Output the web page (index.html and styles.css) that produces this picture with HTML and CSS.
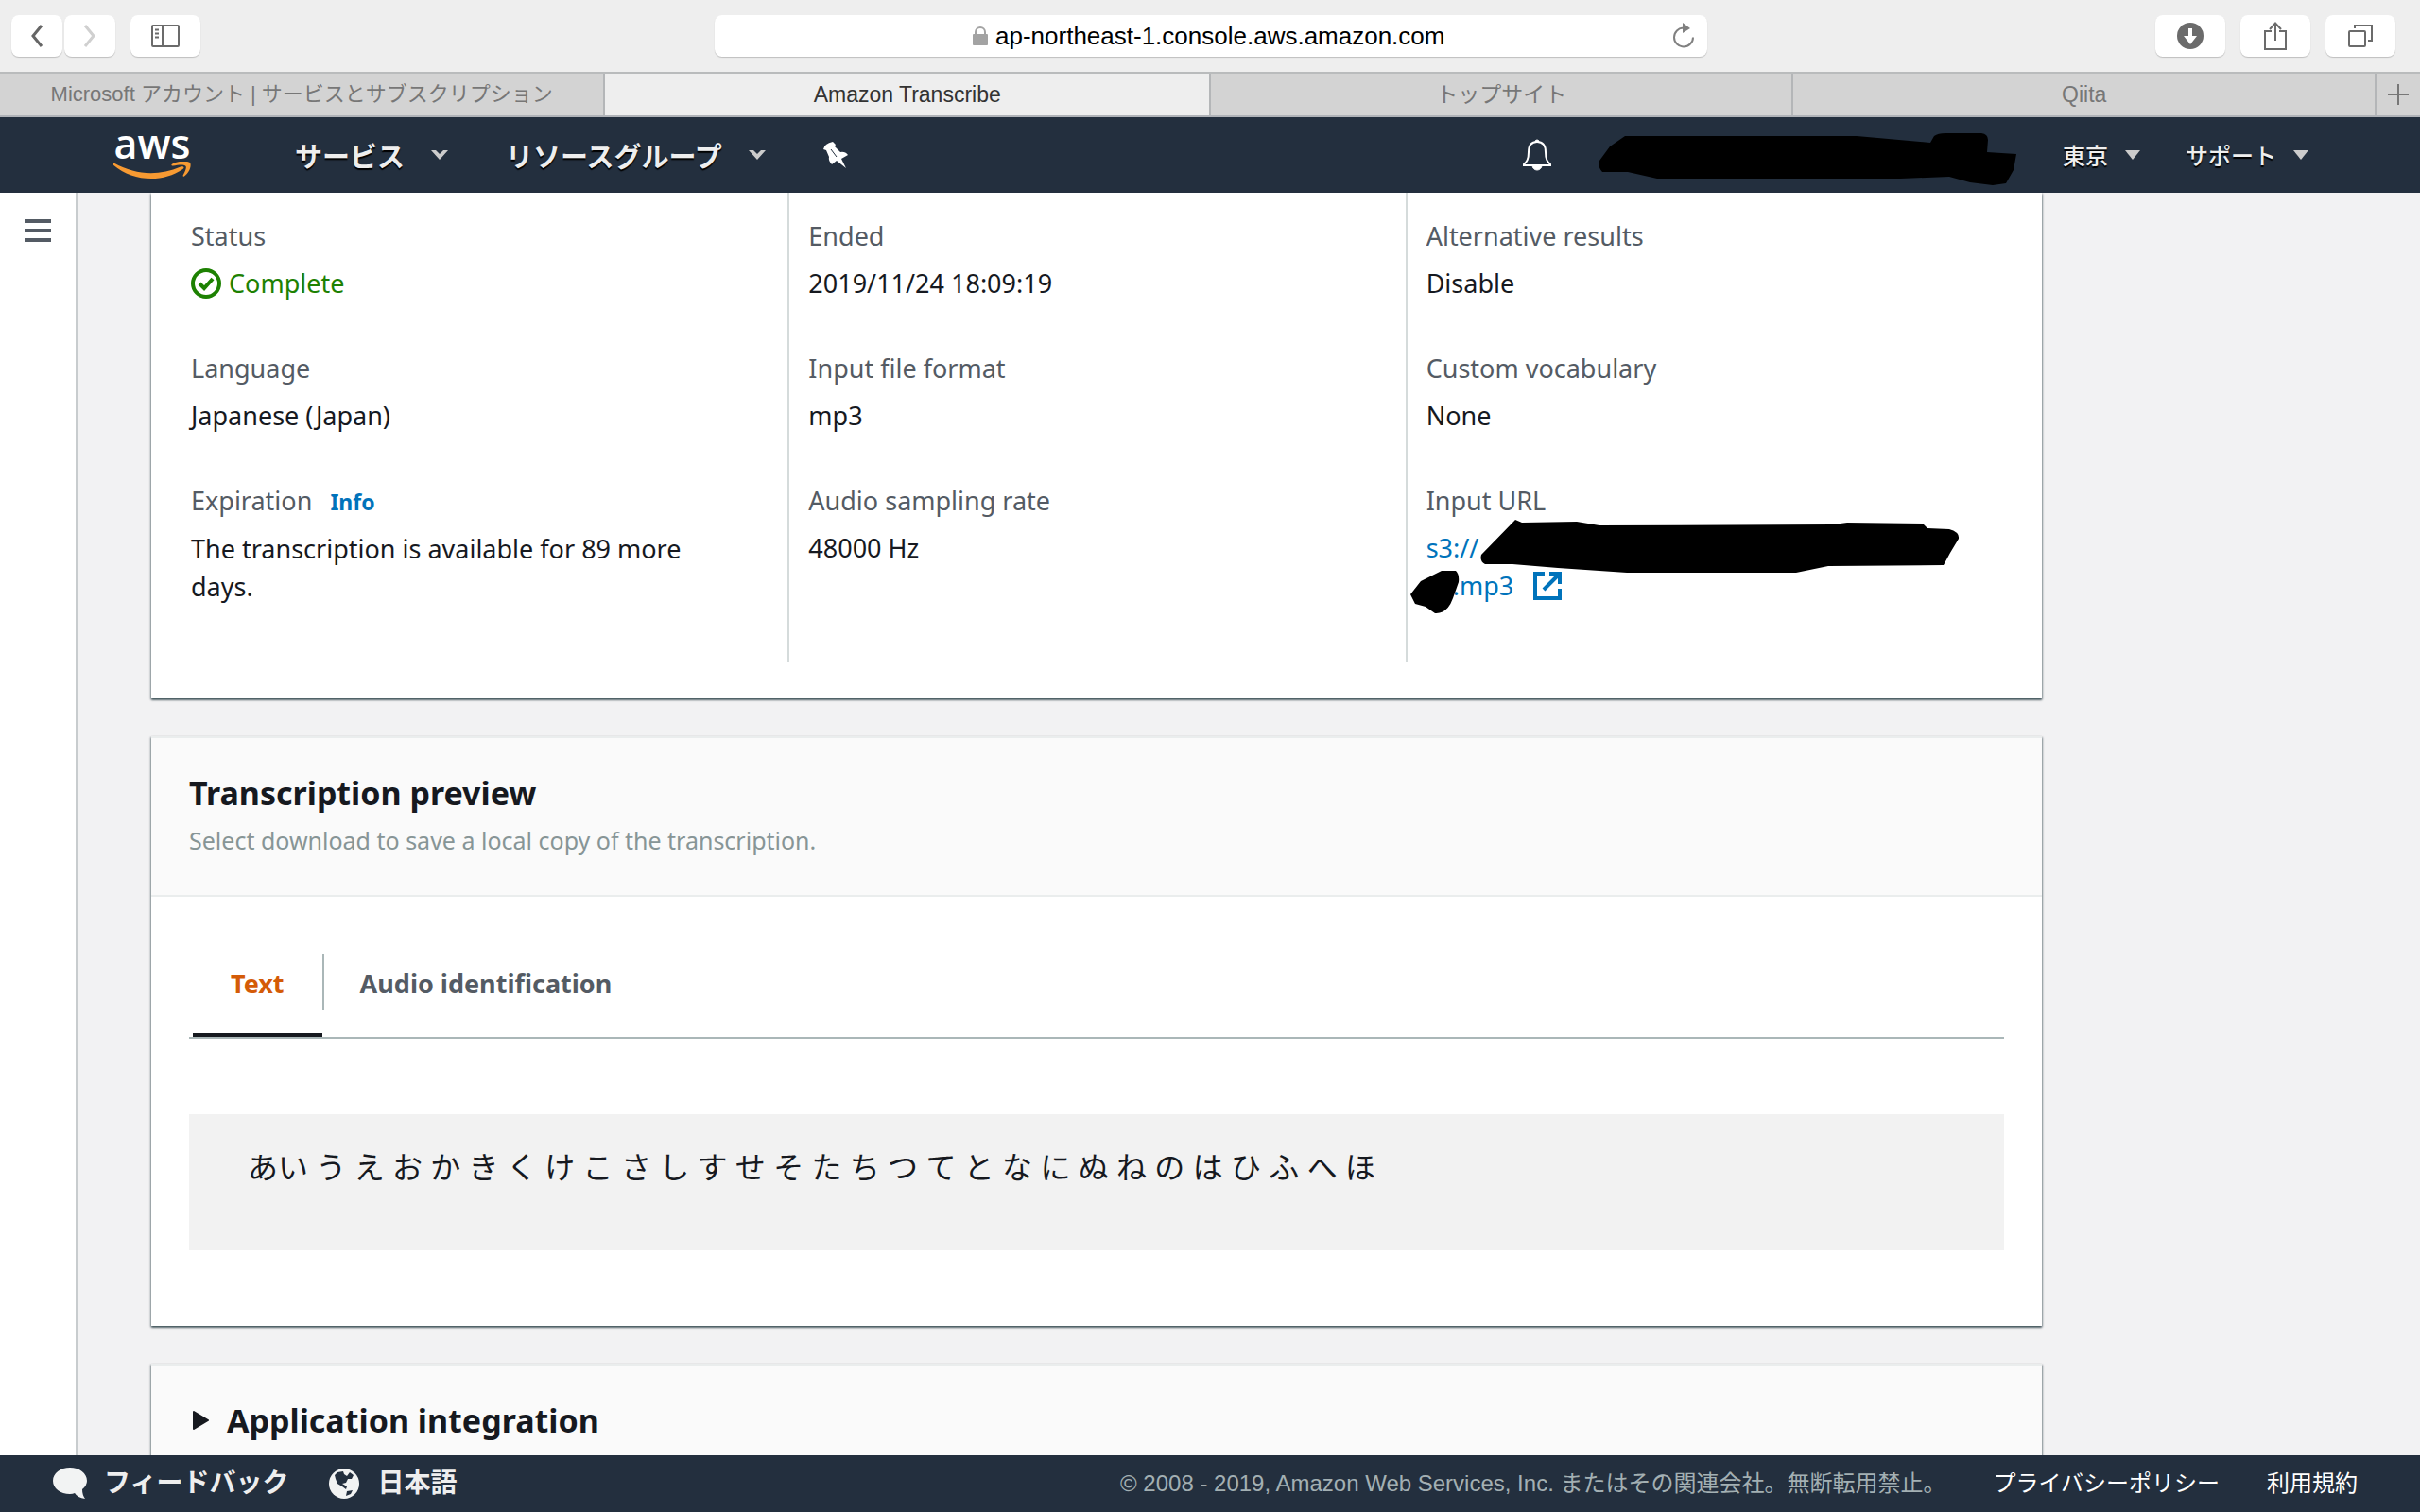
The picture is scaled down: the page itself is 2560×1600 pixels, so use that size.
FILE: index.html
```html
<!DOCTYPE html>
<html lang="ja">
<head>
    <meta charset="utf-8">
    <title>Amazon Transcribe</title>
    <link rel="stylesheet" href="styles.css">
</head>
<body>
    <div class="toolbar">
        <div class="toolbar-left">
            <div class="nav-buttons">
                <button class="tool-btn" aria-label="Back">
                    <svg width="14" height="26" viewBox="0 0 14 26"><path d="M12 2 L3 13 L12 24" fill="none" stroke="#666" stroke-width="3"/></svg>
                </button>
                <button class="tool-btn" aria-label="Forward">
                    <svg width="14" height="26" viewBox="0 0 14 26"><path d="M2 2 L11 13 L2 24" fill="none" stroke="#d0d0d0" stroke-width="3"/></svg>
                </button>
            </div>
            <button class="tool-btn wide" aria-label="Sidebar">
                <svg width="30" height="24" viewBox="0 0 30 24" fill="none" stroke="#6b6b6b" stroke-width="2"><rect x="1" y="1" width="28" height="22" rx="1"/><path d="M12 1V23M4 5.500H8M4 9.500H8M4 13.500H8"/></svg>
            </button>
        </div>
        <div class="address">
            <svg width="16" height="20" viewBox="0 0 16 20"><rect y="8" width="16" height="12" rx="1" fill="#a3a3a3"/><path d="M3 9V6a5 5 0 0 1 10 0v3" fill="none" stroke="#a3a3a3" stroke-width="2"/></svg>
            <input class="address-input" type="text" aria-label="Address" value="ap-northeast-1.console.aws.amazon.com">
            <button class="reload" aria-label="Reload">
                <svg width="26" height="28" viewBox="0 0 26 28"><path d="M13 5.500a10 10 0 1 0 10 10" fill="none" stroke="#808080" stroke-width="2"/><path d="M12 0L20 6L12 11Z" fill="#808080"/></svg>
            </button>
        </div>
        <div class="toolbar-right">
            <button class="tool-btn wide" aria-label="Downloads">
                <svg width="28" height="28" viewBox="0 0 28 28"><circle cx="14" cy="14" r="14" fill="#6b6b6b"/><path d="M12 6h4v8h5l-7 9l-7-9h5z" fill="#fff"/></svg>
            </button>
            <button class="tool-btn wide" aria-label="Share">
                <svg width="24" height="30" viewBox="0 0 24 30" fill="none" stroke="#6b6b6b" stroke-width="2"><path d="M8 10H1V29H23V10H16M12 20V2M6 8L12 1.500L18 8"/></svg>
            </button>
            <button class="tool-btn wide" aria-label="Show tabs">
                <svg width="26" height="24" viewBox="0 0 26 24" fill="none" stroke="#6b6b6b" stroke-width="2"><rect x="1" y="7" width="17" height="16" rx="1"/><path d="M7 4V1H25V17H21"/></svg>
            </button>
        </div>
    </div>

    <div class="tabs">
        <a class="tab first" href="#">Microsoft アカウント | サービスとサブスクリプション</a>
        <a class="tab active" href="#">Amazon Transcribe</a>
        <a class="tab" href="#">トップサイト</a>
        <a class="tab" href="#">Qiita</a>
        <button class="tab-add" aria-label="New tab">
            <svg width="22" height="22" viewBox="0 0 22 22"><path d="M11 0V22M0 11H22" stroke="#777" stroke-width="2"/></svg>
        </button>
    </div>

    <header class="header">
        <a class="logo" href="#" aria-label="AWS">
            <span class="logo-text">aws</span>
            <svg width="82" height="20" viewBox="0 0 82 22" preserveAspectRatio="none" fill="#f79a32"><path d="M1 2C24 16 48 17 71 6C74 5 76 7 73 9C52 25 20 23 0 4C-1 2 0 1 1 2Z"/><path d="M62 3C67-1 78-1 81 1C83 5 80 13 75 17C74 18 73 17 74 15C76 11 78 6 76 5C74 3 68 4 63 5C61 5 61 4 62 3Z"/></svg>
        </a>
        <button class="menu">サービス <svg class="caret" width="20" height="12" viewBox="0 0 20 12"><path d="M1 1H6L10 5L14 1H19L10 11Z"/></svg></button>
        <button class="menu">リソースグループ <svg class="caret" width="20" height="12" viewBox="0 0 20 12"><path d="M1 1H6L10 5L14 1H19L10 11Z"/></svg></button>
        <button class="menu" aria-label="Pin">
            <svg width="26" height="28" viewBox="0 0 26 28" fill="#fff"><path d="M10 0L13 3L12 5L18 11Q23 10 26 14L19 18L24 28L14 20L9 24Q5 20 6 16L3 9L0 8Q1 2 10 0Z"/><path d="M8 8L14 16" stroke="#232f3e" stroke-width="1"/></svg>
        </button>
        <div class="header-right">
            <button class="menu" aria-label="Notifications">
                <svg width="32" height="34" viewBox="0 0 32 34"><path d="M16 3C9 3 7 8 7 14C7 22 5 24 2 27V28H30V27C27 24 25 22 25 14C25 8 23 3 16 3Z" fill="none" stroke="#fff" stroke-width="2"/><path d="M14 3a2 2 0 0 1 4 0zM11 28a5 5 0 0 0 10 0z" fill="#fff" stroke="#fff"/></svg>
            </button>
            <svg class="account-mask" width="444" height="64" viewBox="1690 132 444 64"><path d="M1692 170L1703 155L1719 144H1964L2042 151L2046 144Q2050 141 2058 141H2096Q2103 142 2103 148L2102 161L2133 163L2130 180L2122 194L2108 196L2084 193L2062 187L2010 189H1753L1722 182H1695Q1690 177 1692 170Z"/></svg>
            <button class="menu small">東京 <svg class="caret" width="16" height="10" viewBox="0 0 16 10"><path d="M0 0H16L8 10Z"/></svg></button>
            <button class="menu small">サポート <svg class="caret" width="16" height="10" viewBox="0 0 16 10"><path d="M0 0H16L8 10Z"/></svg></button>
        </div>
    </header>

    <div class="body">
        <nav class="sidebar">
            <button class="hamburger" aria-label="Open navigation">
                <svg width="28" height="24" viewBox="0 0 28 24" fill="#545b64"><path d="M0 0H28V4H0ZM0 10H28V14H0ZM0 20H28V24H0Z"/></svg>
            </button>
        </nav>
        <main class="content">
            <section class="card details">
                <dl class="column">
                    <div class="field">
                        <dt>Status</dt>
                        <dd class="status"><svg width="32" height="32" viewBox="0 0 32 32" fill="none" stroke="#1d8102" stroke-width="4"><circle cx="16" cy="16" r="14"/><path d="M9 16L14 21L23 11"/></svg>Complete</dd>
                    </div>
                    <div class="field">
                        <dt>Language</dt>
                        <dd>Japanese (Japan)</dd>
                    </div>
                    <div class="field">
                        <dt>Expiration <a class="info" href="#">Info</a></dt>
                        <dd>The transcription is available for 89 more days.</dd>
                    </div>
                </dl>
                <dl class="column">
                    <div class="field">
                        <dt>Ended</dt>
                        <dd>2019/11/24 18:09:19</dd>
                    </div>
                    <div class="field">
                        <dt>Input file format</dt>
                        <dd>mp3</dd>
                    </div>
                    <div class="field">
                        <dt>Audio sampling rate</dt>
                        <dd>48000 Hz</dd>
                    </div>
                </dl>
                <dl class="column">
                    <div class="field">
                        <dt>Alternative results</dt>
                        <dd>Disable</dd>
                    </div>
                    <div class="field">
                        <dt>Custom vocabulary</dt>
                        <dd>None</dd>
                    </div>
                    <div class="field">
                        <dt>Input URL</dt>
                        <dd class="url">
                            <a href="#">s3://<br><span class="hidden-name"></span>.mp3
                                <svg class="external" width="30" height="30" viewBox="0 0 30 30" fill="none" stroke="#0073bb" stroke-width="4"><path d="M12 2H2V28H28V18M17 2H28V13M28 2L11 19"/></svg>
                            </a>
                            <svg class="url-mask" width="582" height="104" viewBox="1491 548 582 104"><path d="M1567 587L1603 550L1610 553L1668 552L1692 556L1939 555L1954 553L2034 554L2039 559L2062 560Q2073 563 2072 570L2063 585L2056 598L1934 599L1900 606H1721L1648 601L1600 597H1571Q1565 594 1567 587Z"/><path d="M1492 629L1503 615L1525 604H1540Q1544 608 1543 616L1537 633Q1531 650 1518 649L1508 642L1497 639Z"/></svg>
                        </dd>
                    </div>
                </dl>
            </section>

            <section class="card">
                <div class="card-header">
                    <h2>Transcription preview</h2>
                    <p>Select download to save a local copy of the transcription.</p>
                </div>
                <div class="card-body">
                    <div class="view-tabs" role="tablist">
                        <button class="view-tab selected" role="tab">Text</button>
                        <button class="view-tab" role="tab">Audio identification</button>
                    </div>
                    <div class="transcript">あい う え お か き く け こ さ し す せ そ た ち つ て と な に ぬ ね の は ひ ふ へ ほ</div>
                </div>
            </section>

            <section class="card">
                <div class="card-header">
                    <h2><button class="expander"><svg width="18" height="20" viewBox="0 0 18 20"><path d="M1 1L16 10L1 19Z" fill="#16191f" stroke="#16191f" stroke-width="2" stroke-linejoin="round"/></svg>Application integration</button></h2>
                </div>
            </section>
        </main>
    </div>

    <footer class="footer">
        <button class="footer-btn">
            <svg width="36" height="34" viewBox="0 0 36 34" fill="#f2f3f3"><path d="M18 0C8 0 0 6 0 14S8 28 18 28Q21 28 23 27Q26 32 34 33Q31 29 31 23Q36 19 36 14C36 6 28 0 18 0Z"/></svg>
            フィードバック
        </button>
        <button class="footer-btn">
            <svg width="34" height="34" viewBox="0 0 34 34"><circle cx="17" cy="17" r="16" fill="#f2f3f3"/><path d="M7 8L10 5L16 4L17 7L20 9L23 5L27 8L25 12L21 12L19 16L15 17L20 20L19 23L15 20L10 17L8 12Z" fill="#232f3e"/><path d="M20 25L26 24L24 28L19 30Z" fill="#232f3e"/></svg>
            日本語
        </button>
        <div class="footer-right">
            <span class="copyright">© 2008 - 2019, Amazon Web Services, Inc. またはその関連会社。無断転用禁止。</span>
            <a href="#">プライバシーポリシー</a>
            <a href="#">利用規約</a>
        </div>
    </footer>
</body>
</html>
```
FILE: styles.css
```css
* {
    box-sizing: border-box;
}
body {
    margin: 0;
    height: 100vh;
    display: flex;
    flex-direction: column;
    overflow: hidden;
    font-family: "Noto Sans", "Noto Sans CJK JP", sans-serif;
    font-size: 27px;
    line-height: 40px;
    color: #16191f;
    background-color: #f2f2f3;
}
button, input {
    font: inherit;
    color: inherit;
    border: none;
    background: none;
    padding: 0;
}
button {
    cursor: pointer;
}
a {
    color: #0073bb;
    text-decoration: none;
}
svg {
    flex: none;
}

/* browser chrome */
.toolbar {
    display: grid;
    grid-template-columns: 744fr 1050fr 728fr;
    align-items: center;
    height: 76px;
    padding: 0 26px 0 12px;
    flex: none;
    background-color: #eee;
    font-family: "Liberation Sans", "Noto Sans CJK JP", sans-serif;
}
.toolbar-left, .toolbar-right {
    display: flex;
    gap: 16px;
}
.toolbar-right {
    justify-content: flex-end;
}
.nav-buttons {
    display: flex;
    gap: 2px;
}
.tool-btn {
    display: flex;
    align-items: center;
    justify-content: center;
    width: 54px;
    height: 44px;
    border-radius: 8px;
    background-color: #fff;
    box-shadow: 0 1px 1px rgba(0,0,0,0.2);
}
.tool-btn.wide {
    width: 74px;
}
.address {
    display: flex;
    align-items: center;
    justify-content: center;
    gap: 8px;
    position: relative;
    height: 44px;
    border-radius: 8px;
    background-color: #fff;
    box-shadow: 0 1px 1px rgba(0,0,0,0.2);
}
.address-input {
    width: 480px;
    font-size: 26px;
    color: #000;
}
.reload {
    position: absolute;
    right: 12px;
    display: flex;
}
.tabs {
    display: flex;
    height: 48px;
    flex: none;
    border-top: 2px solid #b9bbbc;
    border-bottom: 2px solid #b0b3b8;
    background-color: #d3d3d3;
    font-family: "Liberation Sans", "Noto Sans CJK JP", sans-serif;
    font-size: 23px;
}
.tab {
    display: flex;
    align-items: center;
    justify-content: center;
    flex: 616;
    border-right: 2px solid #b4b6b8;
    color: #777;
}
.tab.first, .tab.active {
    flex: 640;
}
.tab.first {
    font-size: 22px;
}
.tab.active {
    background-color: #eee;
    color: #333;
}
.tab-add {
    display: flex;
    align-items: center;
    justify-content: center;
    width: 46px;
}

/* console header */
.header {
    display: flex;
    align-items: center;
    height: 80px;
    padding: 0 118px 0 120px;
    flex: none;
    background-color: #232f3e;
    color: #fff;
}
.logo {
    display: flex;
    flex-direction: column;
    align-items: center;
    gap: 4px;
    width: 82px;
    margin-right: 110px;
    color: #fff;
}
.logo-text {
    font-family: "Open Sans", sans-serif;
    font-size: 43px;
    font-weight: 600;
    line-height: 30px;
}
.menu {
    display: flex;
    align-items: center;
    gap: 27px;
    margin-right: 60px;
    font-family: "Noto Sans CJK JP", sans-serif;
    font-size: 29px;
    font-weight: bold;
    color: #eee;
    text-shadow: 0 2px 1px #000;
}
.menu.small {
    gap: 18px;
    font-size: 24px;
    font-weight: 500;
}
.caret {
    fill: #ccc;
}
.header-right {
    display: flex;
    align-items: center;
    gap: 48px;
    margin-left: auto;
}
.header-right .menu {
    margin-right: 0;
}

/* page */
.body {
    display: flex;
    flex: 1;
    min-height: 0;
}
.sidebar {
    width: 82px;
    padding: 28px 26px;
    border-right: 2px solid #c8ccce;
    background-color: #fff;
}
.hamburger {
    display: flex;
}
.content {
    flex: 1;
    padding: 0 400px 0 78px;
    overflow: hidden;
}
.card {
    margin-bottom: 40px;
    border-top: 2px solid #eaeded;
    background-color: #fff;
    box-shadow: 0 2px 2px rgba(0,28,36,0.5), 1px 1px 2px rgba(0,28,36,0.3), -1px 1px 2px rgba(0,28,36,0.3);
}
.details {
    display: grid;
    grid-template-columns: repeat(3, 1fr);
    padding: 0 20px 38px;
    border-top: none;
}
.column {
    margin: 0;
    padding: 26px 60px 60px 20px;
    border-left: 2px solid #d5dbdb;
}
.column:first-child {
    border-left-color: transparent;
}
.field {
    margin-bottom: 50px;
}
.field:last-child {
    margin-bottom: 0;
}
dt {
    margin-bottom: 10px;
    color: #545b64;
}
dd {
    margin: 0;
}
.status {
    display: flex;
    align-items: center;
    gap: 8px;
    color: #1d8102;
}
.info {
    margin-left: 12px;
    font-size: 23px;
    font-weight: bold;
}
.url {
    position: relative;
}
.hidden-name {
    display: inline-block;
    width: 28px;
}
.external {
    margin-left: 14px;
    vertical-align: -5px;
}
/* brush strokes over the bucket name */
.url-mask {
    position: absolute;
    top: -12px;
    left: -18px;
}
.card-header {
    padding: 34px 40px 38px;
    border-bottom: 2px solid #eaeded;
    background-color: #fafafa;
}
h2 {
    margin: 0;
    font-size: 34px;
    line-height: 48px;
}
.card-header p {
    margin: 6px 0 0;
    font-size: 25px;
    color: #879596;
}
.card-body {
    padding: 40px 40px 80px;
}
.view-tabs {
    display: flex;
    padding-left: 4px;
    border-bottom: 2px solid #aab7b8;
}
.view-tab {
    display: flex;
    align-items: center;
    padding: 0 40px;
    height: 108px;
    border-bottom: 4px solid transparent;
    font-weight: bold;
    color: #545b64;
}
.view-tab.selected {
    position: relative;
    color: #d45b07;
    border-bottom-color: #16191f;
}
.view-tab.selected::after {
    content: "";
    position: absolute;
    right: -2px;
    top: 20px;
    height: 60px;
    border-right: 2px solid #aab7b8;
}
.transcript {
    margin-top: 80px;
    padding: 36px 62px 68px;
    background-color: #f2f2f2;
    font-size: 32px;
}
.expander {
    display: flex;
    align-items: center;
    gap: 18px;
    padding-left: 4px;
}

.footer {
    display: flex;
    align-items: center;
    gap: 42px;
    height: 60px;
    padding: 0 66px 0 56px;
    flex: none;
    background-color: #232f3e;
    font-family: "Liberation Sans", "Noto Sans CJK JP", sans-serif;
}
.footer-btn {
    display: flex;
    align-items: center;
    gap: 18px;
    font-size: 28px;
    font-weight: bold;
    color: #eee;
}
.footer-right {
    display: flex;
    gap: 50px;
    margin-left: auto;
    font-size: 24px;
}
.footer-right a {
    color: #fff;
}
.copyright {
    color: #a3b0b3;
}
```
